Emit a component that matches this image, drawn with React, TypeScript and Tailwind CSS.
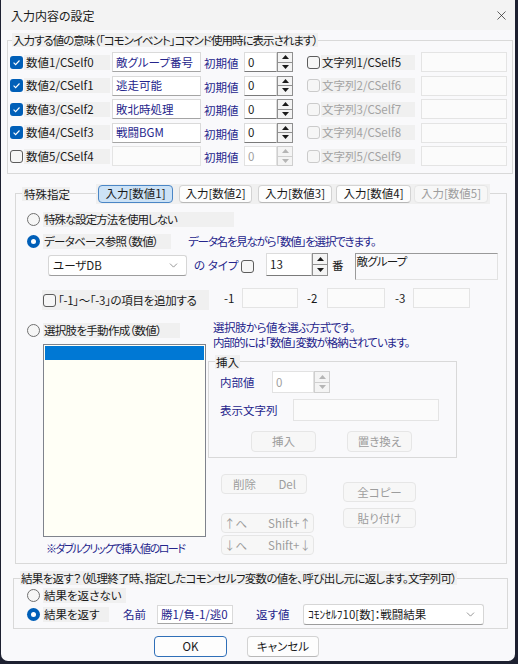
import React from "react";
import { X, ChevronDown } from "lucide-react";

const navy = "text-[#25258c]";
const grayBg = "bg-[#f0f0f0]";

function Check({ checked = false, disabled = false }: { checked?: boolean; disabled?: boolean }) {
  if (checked) {
    return (
      <span className="flex h-[13px] w-[13px] shrink-0 items-center justify-center rounded-[3px] bg-[#005fb8]">
        <svg width="9" height="9" viewBox="0 0 9 9">
          <path d="M1.6 4.7 L3.6 6.6 L7.5 2.5" stroke="white" strokeWidth="1.1" fill="none" />
        </svg>
      </span>
    );
  }
  return (
    <span
      className={`block h-[13px] w-[13px] shrink-0 rounded-[3px] border bg-[#f6f6f6] ${
        disabled ? "border-[#cbcbcb]" : "border-[#5c5c5c]"
      }`}
    />
  );
}

function Radio({ checked = false }: { checked?: boolean }) {
  if (checked) {
    return (
      <span className="flex h-[13px] w-[13px] shrink-0 items-center justify-center rounded-full bg-[#005fb8]">
        <span className="h-[5px] w-[5px] rounded-full bg-white" />
      </span>
    );
  }
  return <span className="block h-[13px] w-[13px] shrink-0 rounded-full border border-[#707070] bg-[#f6f6f6]" />;
}

function Tri({ up, disabled }: { up?: boolean; disabled?: boolean }) {
  return (
    <svg width="7" height="4" viewBox="0 0 7 4">
      <path d={up ? "M0 4 L3.5 0 L7 4 Z" : "M0 0 L3.5 4 L7 0 Z"} fill={disabled ? "#b5b5b5" : "#1a1a1a"} />
    </svg>
  );
}

function Spin({ value, className, disabled }: { value: string; className: string; disabled?: boolean }) {
  return (
    <div className={`flex shrink-0 ${className}`}>
      <div
        className={`flex flex-1 items-center border bg-white pl-[3px] ${
          disabled ? "border-[#e2e2e2] text-[#a0a0a0]" : "border-[#dcdcdc] border-b-[#7a7a7a]"
        }`}
      >
        {value}
      </div>
      <div className={`flex w-[16px] flex-col border ${disabled ? "border-[#cfcfcf]" : "border-[#8f8f8f]"}`}>
        <div
          className={`flex flex-1 items-center justify-center border-b bg-[#f4f4f4] ${
            disabled ? "border-[#cfcfcf]" : "border-[#8f8f8f]"
          }`}
        >
          <Tri up disabled={disabled} />
        </div>
        <div className="flex flex-1 items-center justify-center bg-[#f4f4f4]">
          <Tri disabled={disabled} />
        </div>
      </div>
    </div>
  );
}

function TextBox({ value = "", className, disabled }: { value?: string; className: string; disabled?: boolean }) {
  return (
    <div
      className={`flex shrink-0 items-center border pl-[3px] ${
        disabled ? "border-[#e4e4e4] bg-[#fbfbfb]" : "border-[#dadada] border-b-[#a5a5a5] bg-white"
      } ${className}`}
    >
      {value}
    </div>
  );
}

function Btn({
  children,
  className,
  disabled,
  active,
  primary,
  spread,
}: {
  children: React.ReactNode;
  className: string;
  disabled?: boolean;
  active?: boolean;
  primary?: boolean;
  spread?: boolean;
}) {
  let look = "border-[#d3d3d3] border-b-[#b8b8b8] bg-[#fdfdfd] text-[#1a1a1a]";
  if (disabled) look = "border-[#e6e6e6] bg-[#f7f7f7] text-[#9d9d9d]";
  if (active) look = "border-[#4b86c6] bg-[#cce2f6] text-[#1a1a1a]";
  if (primary) look = "border-[#2f6fb8] bg-[#fdfdfd] text-[#1a1a1a]";
  return (
    <div
      className={`flex shrink-0 items-center rounded-[4px] border whitespace-nowrap ${
        spread ? "justify-between" : "justify-center"
      } ${look} ${className}`}
    >
      {children}
    </div>
  );
}

function Combo({ value, className }: { value: string; className: string }) {
  return (
    <div
      className={`flex shrink-0 items-center justify-between rounded-[3px] border border-[#d6d6d6] border-b-[#9d9d9d] bg-white pl-[4px] pr-[6px] ${className}`}
    >
      <span>{value}</span>
      <ChevronDown size={13} strokeWidth={1.2} className="text-[#606060]" />
    </div>
  );
}

const rows = [
  { n: "数値1/CSelf0", name: "敵グループ番号", s: "文字列1/CSelf5", on: true, sOn: true },
  { n: "数値2/CSelf1", name: "逃走可能", s: "文字列2/CSelf6", on: true, sOn: false },
  { n: "数値3/CSelf2", name: "敗北時処理", s: "文字列3/CSelf7", on: true, sOn: false },
  { n: "数値4/CSelf3", name: "戦闘BGM", s: "文字列4/CSelf8", on: true, sOn: false },
  { n: "数値5/CSelf4", name: "", s: "文字列5/CSelf9", on: false, sOn: false },
];

const tabs = [
  { t: "入力[数値1]", w: "w-[75px]", active: true },
  { t: "入力[数値2]", w: "ml-[6px] w-[73px]" },
  { t: "入力[数値3]", w: "ml-[6px] w-[74px]" },
  { t: "入力[数値4]", w: "ml-[4px] w-[75px]" },
  { t: "入力[数値5]", w: "ml-[3px] w-[74px]", disabled: true },
];

export default function App() {
  return (
    <div className="h-[664px] w-[518px] bg-[#1d2030] pb-[3px] pl-[1px] pr-[3px] font-['Noto_Sans_CJK_JP','Noto_Sans',sans-serif] text-[11.5px] leading-[15px] text-[#1a1a1a] [font-feature-settings:'palt']">
      <div className="flex h-full flex-col overflow-hidden rounded-b-[7px] bg-[#f9f9fb]">
        {/* title bar */}
        <div className="flex h-[30px] shrink-0 items-center justify-between bg-[#f3f3f3] pl-[10px] pr-[6px]">
          <span className="text-[12px]">入力内容の設定</span>
          <X size={15} strokeWidth={1.1} className="text-[#1a1a1a]" />
        </div>

        {/* 入力する値の意味 */}
        <div className="relative ml-[6px] mt-[10px] h-[134px] w-[506px] shrink-0 border border-[#d9d9d9] pt-[11px]">
          <div className={`absolute left-[4px] top-[-8px] h-[14px] whitespace-nowrap px-[1px] tracking-[-1px] ${grayBg}`}>
            入力する値の意味（「コモンイベント」コマンド使用時に表示されます）
          </div>
          <div className="flex flex-col gap-[3.5px]">
            {rows.map((r) => (
              <div key={r.n} className="flex h-[20px] items-center whitespace-nowrap pl-[2px]">
                <Check checked={r.on} />
                <div className={`ml-[1px] flex h-[15px] w-[86px] shrink-0 items-center pl-[2px] ${grayBg}`}>{r.n}</div>
                <TextBox value={r.name} className={`ml-[2px] h-[20px] w-[89px] ${navy}`} disabled={!r.on} />
                <div className={`w-[43px] shrink-0 pl-[3px] pt-[3px] ${navy}`}>初期値</div>
                <Spin value="0" className="h-[20px] w-[49px]" disabled={!r.on} />
                <div className="ml-[14px] shrink-0">
                  <Check disabled={!r.sOn} />
                </div>
                <div
                  className={`ml-[1px] flex h-[15px] w-[94px] shrink-0 items-center pl-[1px] ${grayBg} ${
                    r.sOn ? "" : "text-[#a3a3a3]"
                  }`}
                >
                  {r.s}
                </div>
                <TextBox className="ml-[6px] h-[20px] w-[86px]" disabled />
              </div>
            ))}
          </div>
        </div>

        {/* 特殊指定 */}
        <div className="relative ml-[14px] mt-[19px] h-[371px] w-[492px] shrink-0 border border-[#d9d9d9] pt-[18px] whitespace-nowrap">
          <div className="absolute left-[6px] top-[-10px] flex h-[19px] items-center">
            <div className={`h-[14px] w-[48px] pl-[2px] ${grayBg}`}>特殊指定</div>
            <div className={`ml-[26px] flex h-[20px] items-center px-[2px] ${grayBg}`}>
              {tabs.map((t) => (
                <Btn key={t.t} className={`h-[18px] ${t.w}`} active={t.active} disabled={t.disabled}>
                  {t.t}
                </Btn>
              ))}
            </div>
          </div>

          {/* radio 1 */}
          <div className="flex h-[15px] items-center pl-[11px]">
            <Radio />
            <div className={`ml-[3px] h-[15px] w-[191px] pl-[1px] tracking-[-1px] ${grayBg}`}>特殊な設定方法を使用しない</div>
          </div>

          {/* radio 2 */}
          <div className="mt-[7px] flex h-[15px] items-center pl-[11px]">
            <Radio checked />
            <div className={`ml-[3px] h-[15px] w-[128px] pl-[1px] tracking-[-0.7px] ${grayBg}`}>データベース参照（数値）</div>
            <div className={`ml-[17px] tracking-[-1.2px] ${navy}`}>データ名を見ながら「数値」を選択できます。</div>
          </div>

          {/* combo row */}
          <div className="mt-[4px] flex h-[27px] items-start pl-[32px]">
            <Combo value="ユーザDB" className="mt-[2px] h-[21px] w-[139px]" />
            <div className={`ml-[7px] mt-[2px] w-[38px] shrink-0 leading-[21px] ${navy}`}>の タイプ</div>
            <div className="ml-[9px] mt-[7px] shrink-0">
              <Check />
            </div>
            <Spin value="13" className="ml-[12px] h-[23px] w-[62px]" />
            <div className="ml-[4px] mt-[2px] shrink-0 leading-[21px]">番</div>
            <div className="ml-[11px] h-[27px] w-[143px] shrink-0 border border-[#e2e2e2] border-l-[#9a9a9a] border-t-[#9a9a9a] pl-[1px] tracking-[-0.8px]">
              敵グループ
            </div>
          </div>

          {/* -1 -3 row */}
          <div className="mt-[8px] flex h-[22px] items-start pl-[26px]">
            <div className={`mt-[2px] flex h-[20px] w-[167px] shrink-0 items-center pl-[1px] ${grayBg}`}>
              <Check />
              <span className="ml-[2px] tracking-[-0.3px]">「-1」～「-3」の項目を追加する</span>
            </div>
            <div className="ml-[15px] w-[18px] shrink-0 leading-[21px]">-1</div>
            <TextBox className="h-[20px] w-[56px]" disabled />
            <div className="ml-[9px] w-[20px] shrink-0 leading-[21px]">-2</div>
            <TextBox className="h-[20px] w-[58px]" disabled />
            <div className="ml-[10px] w-[18px] shrink-0 leading-[21px]">-3</div>
            <TextBox className="h-[20px] w-[57px]" disabled />
          </div>

          {/* lower part */}
          <div className="mt-[10px] flex pl-[11px]">
            <div className="flex w-[179px] shrink-0 flex-col">
              <div className="mt-[3px] flex h-[15px] items-center">
                <Radio />
                <div className={`ml-[3px] h-[15px] w-[137px] pl-[1px] tracking-[-0.7px] ${grayBg}`}>選択肢を手動作成（数値）</div>
              </div>
              <div className="ml-[16px] mt-[6px] h-[193px] w-[163px] border border-[#7f838c] bg-[#fffff6] p-[1px]">
                <div className="h-[14px] bg-[#0078d4]" />
              </div>
              <div className={`ml-[19px] mt-[4px] text-[11px] leading-[14px] tracking-[-1.5px] ${navy}`}>
                ※ダブルクリックで挿入値のロード
              </div>
            </div>

            <div className="ml-[2px] flex flex-col">
              <div className={`pl-[5px] ${navy}`}>
                <div className="tracking-[-0.5px]">選択肢から値を選ぶ方式です。</div>
                <div className="tracking-[-1px]">内部的には「数値」変数が格納されています。</div>
              </div>

              <div className="relative mt-[11px] h-[97px] w-[249px] border border-[#d9d9d9] pt-[9px]">
                <div className={`absolute left-[6px] top-[-7px] h-[14px] px-[1px] ${grayBg}`}>挿入</div>
                <div className="flex h-[22px] items-center pl-[11px]">
                  <div className={`w-[52px] shrink-0 ${navy}`}>内部値</div>
                  <Spin value="0" className="h-[22px] w-[58px]" disabled />
                </div>
                <div className="mt-[6px] flex h-[22px] items-center pl-[11px]">
                  <div className={`w-[73px] shrink-0 ${navy}`}>表示文字列</div>
                  <TextBox className="h-[22px] w-[146px]" disabled />
                </div>
                <div className="mt-[10px] flex pl-[42px]">
                  <Btn className="h-[21px] w-[65px]" disabled>
                    挿入
                  </Btn>
                  <Btn className="ml-[31px] h-[21px] w-[65px]" disabled>
                    置き換え
                  </Btn>
                </div>
              </div>

              <div className="flex pl-[13px]">
                <div className="flex w-[93px] shrink-0 flex-col">
                  <Btn className="mt-[16px] h-[20px] w-[86px] pl-[11px] pr-[10px]" disabled spread>
                    <span>削除</span>
                    <span>Del</span>
                  </Btn>
                  <Btn className="mt-[19px] h-[20px] w-[93px] px-[2px]" disabled spread>
                    <span>↑へ</span>
                    <span>Shift+↑</span>
                  </Btn>
                  <Btn className="mt-[2px] h-[20px] w-[93px] px-[2px]" disabled spread>
                    <span>↓へ</span>
                    <span>Shift+↓</span>
                  </Btn>
                </div>
                <div className="ml-[29px] flex flex-col">
                  <Btn className="mt-[24px] h-[20px] w-[73px]" disabled>
                    全コピー
                  </Btn>
                  <Btn className="mt-[6px] h-[20px] w-[73px]" disabled>
                    貼り付け
                  </Btn>
                </div>
              </div>
            </div>
          </div>
        </div>

        {/* 結果を返す */}
        <div className="relative ml-[12px] mt-[14px] h-[51px] w-[495px] shrink-0 border border-[#d9d9d9] pt-[9px] whitespace-nowrap">
          <div className={`absolute left-[6px] top-[-8px] h-[14px] px-[1px] tracking-[-0.7px] ${grayBg}`}>
            結果を返す？（処理終了時、指定したコモンセルフ変数の値を、呼び出し元に返します。文字列可）
          </div>
          <div className="flex h-[15px] items-center pl-[13px]">
            <Radio />
            <div className={`ml-[3px] h-[15px] w-[83px] pl-[1px] ${grayBg}`}>結果を返さない</div>
          </div>
          <div className="mt-[4px] flex h-[15px] items-center pl-[13px]">
            <Radio checked />
            <div className={`ml-[3px] h-[15px] w-[66px] shrink-0 pl-[1px] ${grayBg}`}>結果を返す</div>
            <div className={`ml-[14px] w-[34px] shrink-0 ${navy}`}>名前</div>
            <TextBox value="勝1/負-1/逃0" className={`h-[19px] w-[76px] ${navy}`} />
            <div className={`ml-[23px] w-[47px] shrink-0 ${navy}`}>返す値</div>
            <Combo value="ｺﾓﾝｾﾙﾌ10[数]：戦闘結果" className="h-[21px] w-[181px]" />
          </div>
        </div>

        {/* buttons */}
        <div className="ml-[153px] mt-[7px] flex">
          <Btn className="h-[21px] w-[73px]" primary>
            OK
          </Btn>
          <Btn className="ml-[20px] h-[21px] w-[72px]">キャンセル</Btn>
        </div>
      </div>
    </div>
  );
}
